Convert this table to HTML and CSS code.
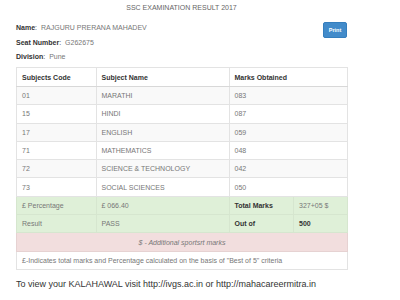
FILE: index.html
```html
<!DOCTYPE html>
<html>
<head>
<meta charset="utf-8">
<link rel="stylesheet" href="styles.css">
</head>
<body>
<div class="page">
  <div class="title">SSC EXAMINATION RESULT 2017</div>
  <div class="info">
    <div class="lines">
      <div class="line"><span class="lbl">Name</span>: <span class="val">RAJGURU PRERANA MAHADEV</span></div>
      <div class="line"><span class="lbl">Seat Number</span>: <span class="val">G262675</span></div>
      <div class="line"><span class="lbl">Division</span>: <span class="val">Pune</span></div>
    </div>
    <button class="print">Print</button>
  </div>
  <table class="result">
    <colgroup>
      <col class="c1"><col class="c2"><col class="c3"><col class="c4">
    </colgroup>
    <thead>
      <tr class="head"><th>Subjects Code</th><th>Subject Name</th><th colspan="2">Marks Obtained</th></tr>
    </thead>
    <tbody>
      <tr class="odd"><td>01</td><td>MARATHI</td><td colspan="2">083</td></tr>
      <tr><td>15</td><td>HINDI</td><td colspan="2">087</td></tr>
      <tr class="odd"><td>17</td><td>ENGLISH</td><td colspan="2">059</td></tr>
      <tr><td>71</td><td>MATHEMATICS</td><td colspan="2">048</td></tr>
      <tr class="odd"><td>72</td><td>SCIENCE &amp; TECHNOLOGY</td><td colspan="2">042</td></tr>
      <tr><td>73</td><td>SOCIAL SCIENCES</td><td colspan="2">050</td></tr>
      <tr class="success"><td>£ Percentage</td><td>£ 066.40</td><td class="b">Total Marks</td><td>327+05 $</td></tr>
      <tr class="success"><td>Result</td><td>PASS</td><td class="b">Out of</td><td class="b">500</td></tr>
      <tr class="danger"><td colspan="4" class="note">$ - Additional sportsrt marks</td></tr>
      <tr><td colspan="4">£-Indicates total marks and Percentage calculated on the basis of "Best of 5" criteria</td></tr>
    </tbody>
  </table>
  <div class="visit">To view your KALAHAWAL visit http://ivgs.ac.in or http://mahacareermitra.in</div>
</div>
</body>
</html>
```
FILE: styles.css
```css
html, body {
  margin: 0;
  padding: 0;
  background: #fff;
}
body {
  font-family: "Liberation Sans", Arial, sans-serif;
  color: #333;
}
.page {
  width: 331px;
  margin-left: 16px;
}
.title {
  padding-top: 3px;
  height: 10px;
  line-height: 10px;
  font-size: 7px;
  color: #666;
  text-align: center;
}
.info {
  margin-top: 8px;
  display: flex;
  justify-content: space-between;
  align-items: flex-start;
}
.line {
  height: 14.5px;
  line-height: 14.5px;
  font-size: 7px;
  color: #333;
}
.lbl {
  font-weight: bold;
  color: #333;
}
.val {
  color: #777;
  margin-left: 2px;
}
.print {
  margin-top: 1px;
  width: 24px;
  height: 16px;
  padding: 0;
  border: 1px solid #357ebd;
  border-radius: 2px;
  background: #428bca;
  color: #fff;
  font-family: "Liberation Sans", Arial, sans-serif;
  font-size: 5.5px;
  font-weight: bold;
}
.result {
  margin-top: 2.5px;
  width: 331px;
  border-collapse: collapse;
  table-layout: fixed;
  border: 1px solid #e3e3e3;
  font-size: 7px;
}
.c1 { width: 79.5px; }
.c2 { width: 133px; }
.c3 { width: 64.5px; }
.c4 { width: 54px; }
.result th, .result td {
  padding: 0 0 0 5px;
  text-align: left;
  border: 1px solid #e3e3e3;
  line-height: 9px;
  color: #777;
  font-weight: normal;
  white-space: nowrap;
  overflow: hidden;
}
.result th {
  font-weight: bold;
  color: #333;
  border-bottom: 1px solid #d8d8d8;
}
.result tr.head { height: 19px; }
.result tbody tr { height: 18.3px; }
.result tr.odd td { background: #f9f9f9; }
.result tr.success td { background: #dff0d8; border-color: #d6e6cf; }
.result tr.danger td { background: #f2dede; border-color: #e6d2d2; }
.result td.b {
  font-weight: bold;
  color: #333;
}
.result td.note {
  text-align: center;
  font-style: italic;
  padding: 0;
}
.visit {
  margin-top: 8px;
  font-size: 9px;
  line-height: 12px;
  color: #333;
}
```
